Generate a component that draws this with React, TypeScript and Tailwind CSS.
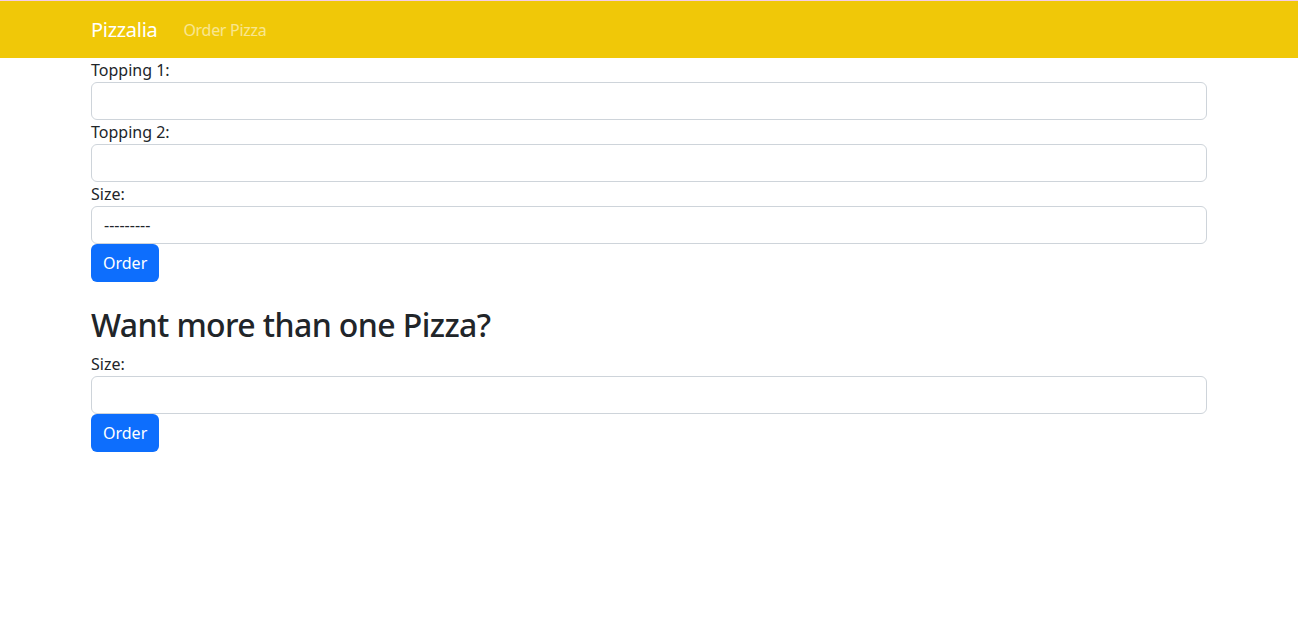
import { useState } from "react";

function Field({ label, children }: { label: string; children: React.ReactNode }) {
  return (
    <div>
      <label className="block leading-6">{label}</label>
      {children}
    </div>
  );
}

const inputCls =
  "block w-full h-[38px] rounded-[6px] border border-[#ced4da] bg-white px-3 text-base text-[#212529] outline-none";

function OrderButton() {
  return (
    <button className="block h-[38px] rounded-[6px] bg-[#0d6efd] px-3 text-base text-white">
      Order
    </button>
  );
}

export default function App() {
  const [size, setSize] = useState("");

  return (
    <div className="min-h-[633px] bg-white text-base text-[#212529] font-['Noto_Sans','Open_Sans',sans-serif]">
      <nav className="h-[58px] border-t border-[#f5cde6] bg-[#f0c808]">
        <div className="mx-auto flex h-full max-w-[1140px] items-center px-3">
          <a className="mr-[26px] text-xl tracking-[-0.3px] text-white">Pizzalia</a>
          <a className="text-base tracking-[-0.3px] text-white/55">Order Pizza</a>
        </div>
      </nav>

      <main className="mx-auto max-w-[1140px] px-3">
        <form>
          <Field label="Topping 1:">
            <input className={inputCls} type="text" />
          </Field>
          <Field label="Topping 2:">
            <input className={inputCls} type="text" />
          </Field>
          <Field label="Size:">
            <select
              className={inputCls + " appearance-none"}
              value={size}
              onChange={(e) => setSize(e.target.value)}
            >
              <option value="">---------</option>
              <option value="small">Small</option>
              <option value="medium">Medium</option>
              <option value="large">Large</option>
            </select>
          </Field>
          <OrderButton />
        </form>

        <h2 className="mt-6 mb-2 text-[32px] leading-[1.2] font-medium tracking-[-0.6px]">
          Want more than one Pizza?
        </h2>

        <form>
          <Field label="Size:">
            <input className={inputCls} type="number" />
          </Field>
          <OrderButton />
        </form>
      </main>
    </div>
  );
}
